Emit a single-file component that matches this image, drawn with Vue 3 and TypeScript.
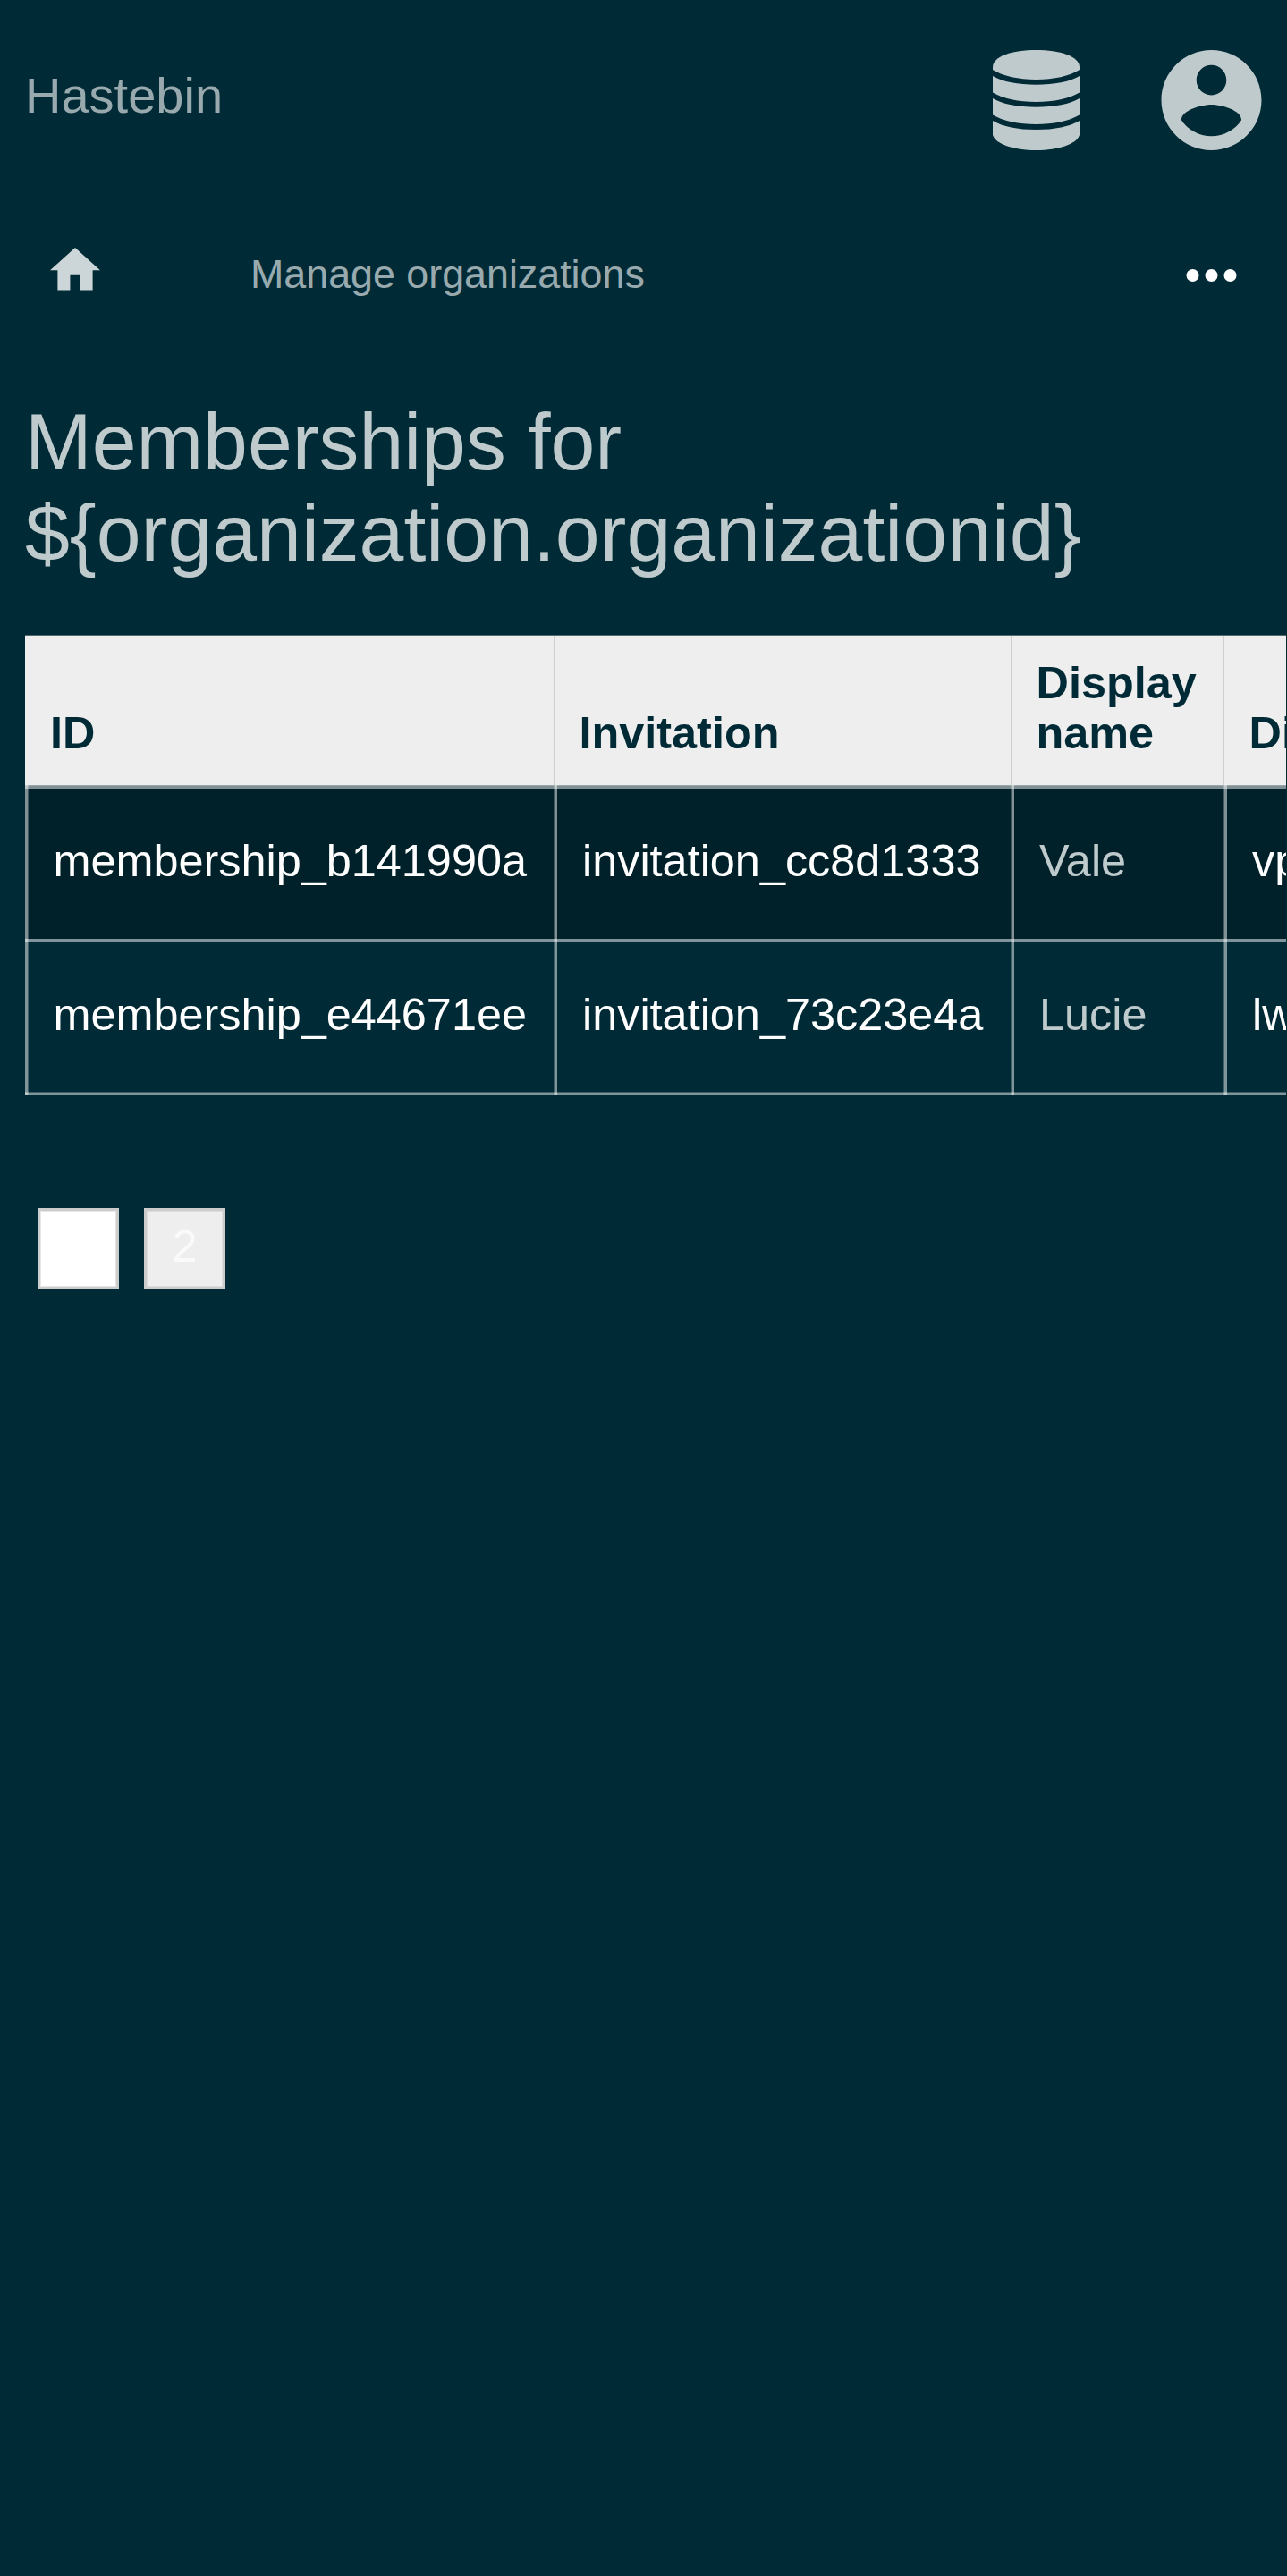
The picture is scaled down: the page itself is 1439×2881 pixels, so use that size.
<script setup lang="ts">
interface Membership {
  id: string
  invitation: string
  displayName: string
  handle: string
}

const columns: string[] = ['ID', 'Invitation', 'Display name', 'Di']

const memberships: Membership[] = [
  { id: 'membership_b141990a', invitation: 'invitation_cc8d1333', displayName: 'Vale', handle: 'vp' },
  { id: 'membership_e44671ee', invitation: 'invitation_73c23e4a', displayName: 'Lucie', handle: 'lw' },
]

const pages: number[] = [1, 2]
const currentPage = 1
</script>

<template>
  <div class="page">
    <header class="topbar">
      <a class="brand">Hastebin</a>
      <div class="actions">
        <svg class="database" viewBox="0 0 97 112" aria-hidden="true">
          <path d="M0 19C0 7 22 0 48.500 0S97 7 97 19V22C86 29 68 33 48.500 33S11 29 0 22Z" />
          <path d="M0 29C11 35.500 28 38.700 48.500 38.700S86 35.500 97 29V47.500C86 54 68 58 48.500 58S11 54 0 47.500Z" />
          <path d="M0 54C11 60.500 28 63.700 48.500 63.700S86 60.500 97 54V72.500C86 79 68 83 48.500 83S11 79 0 72.500Z" />
          <path d="M0 79C11 85.700 28 89 48.500 89S86 85.700 97 79V95C94 105 74 112 48.500 112S3 105 0 95Z" />
        </svg>
        <svg class="account" viewBox="1.911 2 20.179 20" aria-hidden="true">
          <path d="M12 2C6.480 2 2 6.480 2 12s4.480 10 10 10 10-4.480 10-10S17.520 2 12 2zm0 3c1.660 0 3 1.340 3 3s-1.340 3-3 3-3-1.340-3-3 1.340-3 3-3zm0 14.200c-2.500 0-4.710-1.280-6-3.220.030-1.990 4-3.080 6-3.080 1.990 0 5.970 1.090 6 3.080-1.290 1.940-3.500 3.220-6 3.220z" />
        </svg>
      </div>
    </header>

    <nav class="navbar">
      <svg class="home" viewBox="2 3 20 17" aria-hidden="true">
        <path d="M10 20v-6h4v6h5v-8h3L12 3 2 12h3v8z" />
      </svg>
      <a class="crumb">Manage organizations</a>
      <svg class="more" viewBox="3.857 10 16.286 4" aria-hidden="true">
        <circle cx="6" cy="12" r="2" />
        <circle cx="12" cy="12" r="2" />
        <circle cx="18" cy="12" r="2" />
      </svg>
    </nav>

    <h1>Memberships for ${organization.organizationid}</h1>

    <div class="table" role="table">
      <div class="row head" role="row">
        <div v-for="column in columns" :key="column" class="cell" role="columnheader">{{ column }}</div>
      </div>
      <div class="body">
        <div v-for="m in memberships" :key="m.id" class="row" role="row">
          <div class="cell"><a>{{ m.id }}</a></div>
          <div class="cell"><a>{{ m.invitation }}</a></div>
          <div class="cell">{{ m.displayName }}</div>
          <div class="cell"><a>{{ m.handle }}</a></div>
        </div>
      </div>
    </div>

    <div class="pagination">
      <a v-for="p in pages" :key="p" class="page-link" :class="{ current: p === currentPage }">{{ p }}</a>
    </div>
  </div>
</template>

<style>
body {
  background: #002b36;
}
</style>

<style scoped>
.page {
  box-sizing: border-box;
  width: 1438px;
  min-height: 2881px;
  padding: 56px 0 0 28px;
  overflow: hidden;
  background: #002b36;
  color: #bfcacd;
  font-family: "Liberation Sans", Arial, sans-serif;
  font-size: 50.4px;
  line-height: 56px;
}

svg {
  display: block;
  fill: currentColor;
}

.topbar {
  display: flex;
  justify-content: space-between;
  height: 112px;
  padding-right: 27px;
}

.brand {
  padding-top: 19px;
  color: #99aaaf;
  font-size: 56px;
  line-height: 64px;
}

.actions {
  display: flex;
  gap: 91px;
}

.database {
  width: 97px;
  height: 112px;
}

.account {
  width: 113px;
  height: 112px;
}

.navbar {
  display: flex;
  align-items: flex-start;
  height: 166px;
  margin-top: 109px;
}

.home {
  width: 56px;
  height: 47.6px;
  margin: 0.4px 0 0 28px;
  color: #ccd5d7;
}

.crumb {
  margin: 3px 0 0 168px;
  color: #99aaaf;
  font-size: 44.8px;
  line-height: 52px;
}

.more {
  width: 57px;
  height: 14px;
  margin: 24px 55px 0 auto;
  color: #fff;
}

h1 {
  width: 1380px;
  margin: 0;
  font-size: 89.6px;
  font-weight: 400;
  line-height: 102px;
}

.table {
  width: 1640px;
  margin-top: 63px;
}

.row {
  display: grid;
  grid-template-columns: 591px 511px 238px 300px;
}

.head {
  box-sizing: border-box;
  height: 168px;
  border-top: 1px solid #52696f;
  background: #eee;
  color: #002b36;
  font-weight: 700;
}

.head .cell {
  display: flex;
  align-items: flex-end;
  padding: 0 28px 30px;
}

.head .cell + .cell {
  padding-left: 27.5px;
  border-left: 1px solid #ccd0d1;
}

.body {
  position: relative;
}

.body .row {
  box-sizing: border-box;
  height: 172px;
  padding-top: 57px;
}

.body .row:first-child {
  background: #002129;
}

.body .row:last-child {
  height: 175px;
}

.body .cell {
  padding-left: 32px;
}

.body .cell:first-child {
  padding-left: 31.5px;
}

.body a {
  color: #fff;
}

/* Translucent rules over the rows, brighter where they cross */
.body::after {
  content: "";
  position: absolute;
  inset: 0;
  background:
    linear-gradient(rgba(255, 255, 255, 0.5) 0 0) 0 0 / 3px 100% no-repeat,
    linear-gradient(rgba(255, 255, 255, 0.25) 0 0) 3px 0 / 1px 100% no-repeat,
    linear-gradient(rgba(255, 255, 255, 0.25) 0 0) 591px 0 / 1px 100% no-repeat,
    linear-gradient(rgba(255, 255, 255, 0.5) 0 0) 592px 0 / 3px 100% no-repeat,
    linear-gradient(rgba(255, 255, 255, 0.25) 0 0) 1102px 0 / 1px 100% no-repeat,
    linear-gradient(rgba(255, 255, 255, 0.5) 0 0) 1103px 0 / 3px 100% no-repeat,
    linear-gradient(rgba(255, 255, 255, 0.25) 0 0) 1340px 0 / 1px 100% no-repeat,
    linear-gradient(rgba(255, 255, 255, 0.5) 0 0) 1341px 0 / 3px 100% no-repeat,
    linear-gradient(rgba(255, 255, 255, 0.6) 0 0) 0 0 / 100% 1px no-repeat,
    linear-gradient(rgba(255, 255, 255, 0.5) 0 0) 0 1px / 100% 3px no-repeat,
    linear-gradient(rgba(255, 255, 255, 0.5) 0 0) 0 172px / 100% 3px no-repeat,
    linear-gradient(rgba(255, 255, 255, 0.25) 0 0) 0 175px / 100% 1px no-repeat,
    linear-gradient(rgba(255, 255, 255, 0.25) 0 0) 0 343px / 100% 1px no-repeat,
    linear-gradient(rgba(255, 255, 255, 0.5) 0 0) 0 344px / 100% 3px no-repeat;
}

.pagination {
  display: flex;
  gap: 28px;
  margin: 126px 0 0 14px;
}

.page-link {
  box-sizing: border-box;
  width: 91px;
  height: 91px;
  padding-top: 12px;
  border: 3px solid #ccc;
  box-shadow: inset 0 0 0 1px #ddd;
  background: #eee;
  color: #fafafa;
  text-align: center;
}

.page-link.current {
  box-shadow: inset 0 0 0 1px #e6e6e6;
  background: #fff;
  color: #fff;
}
</style>
